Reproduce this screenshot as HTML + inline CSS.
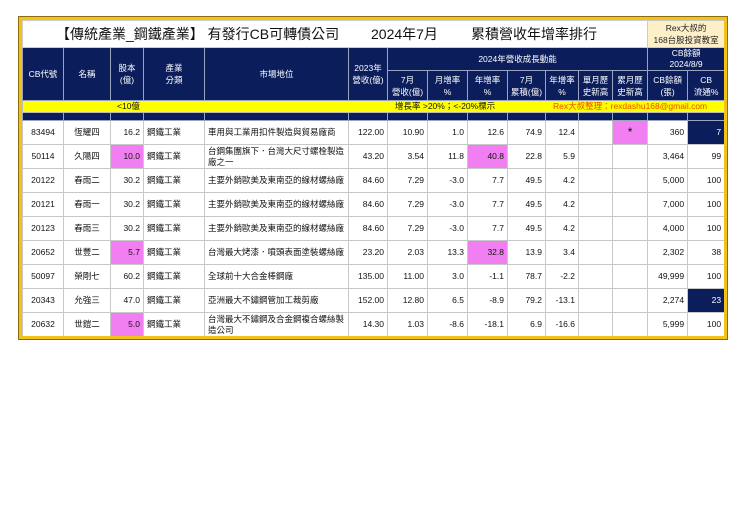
<!DOCTYPE html>
<html><head><meta charset="utf-8">
<style>
body{margin:0;width:740px;height:523px;background:#fff;position:relative;overflow:hidden;font-family:"Liberation Sans","Noto Sans CJK TC",sans-serif;}
#frame{position:absolute;left:19px;top:17px;width:702px;height:316px;border:3px solid #f2c21b;box-shadow:0 0 0 1px #8a6d10;overflow:hidden;}
table{position:absolute;left:0;top:0;border-collapse:collapse;table-layout:fixed;width:702px;font-size:8.5px;color:#111;}
td{padding:0 3px;overflow:hidden;white-space:nowrap;border:1px solid #c8c8c8;line-height:11px;}
.h td{background:#0b1e5b;color:#fff;text-align:center;border:1px solid #9aa3c0;line-height:12px;}
.d td{height:23px;}
.c{text-align:center}.r{text-align:right}.l{text-align:left}
.pk{background:#f27ff2}
.nv{background:#0b1e5b;color:#fff}
.w{white-space:normal;line-height:11px;padding-right:1px}
</style></head><body>
<div id="frame">
<table>
<colgroup><col style="width:41px"><col style="width:47px"><col style="width:33px"><col style="width:61px"><col style="width:144px"><col style="width:39px"><col style="width:40px"><col style="width:40px"><col style="width:40px"><col style="width:38px"><col style="width:33px"><col style="width:34px"><col style="width:35px"><col style="width:40px"><col style="width:37px"></colgroup>
<tr style="height:27px"><td colspan="13" style="position:relative;border:1px solid #ccc;font-size:14px;color:#111;">
<span style="position:absolute;left:33px;top:1px;line-height:24px">【傳統產業_鋼鐵產業】 有發行CB可轉債公司</span>
<span style="position:absolute;left:348px;top:1px;line-height:24px">2024年7月</span>
<span style="position:absolute;left:448px;top:1px;line-height:24px">累積營收年增率排行</span></td>
<td colspan="2" style="background:#fdf0c8;text-align:center;font-size:8.5px;line-height:12px;color:#222;padding:0">Rex大叔的<br>168台股投資教室</td></tr>
<tr class="h" style="height:23px"><td rowspan="2">CB代號</td><td rowspan="2">名稱</td><td rowspan="2">股本<br>(億)</td><td rowspan="2">產業<br>分類</td><td rowspan="2">市場地位</td><td rowspan="2" style="padding:0">2023年<br>營收(億)</td><td colspan="7">2024年營收成長動能</td><td colspan="2" style="line-height:11px">CB餘額<br>2024/8/9</td></tr>
<tr class="h" style="height:30px"><td style="padding:0">7月<br>營收(億)</td><td>月增率<br>%</td><td>年增率<br>%</td><td style="padding:0">7月<br>累積(億)</td><td style="padding:0">年增率<br>%</td><td style="padding:0">單月歷<br>史新高</td><td style="padding:0">累月歷<br>史新高</td><td style="padding:0">CB餘額<br>(張)</td><td style="padding:0">CB<br>流通%</td></tr>
<tr style="height:11px;background:#ffff00;font-size:8.5px;line-height:11px"><td colspan="15" style="position:relative;border:1px solid #bbb;padding:0;height:11px">
<span style="position:absolute;left:94px;top:0">&lt;10億</span>
<span style="position:absolute;left:372px;top:0">增長率 &gt;20%；&lt;-20%標示</span>
<span style="position:absolute;left:530px;top:0;color:#f04a00">Rex大叔整理：rexdashu168@gmail.com</span></td></tr>
<tr class="h" style="height:8px"><td></td><td></td><td></td><td></td><td></td><td></td><td></td><td></td><td></td><td></td><td></td><td></td><td></td><td></td><td></td></tr>
<tr class="d"><td class="c">83494</td><td class="c">恆耀四</td><td class="r">16.2</td><td class="l">鋼鐵工業</td><td class="l">車用與工業用扣件製造與貿易廠商</td><td class="r">122.00</td><td class="r">10.90</td><td class="r">1.0</td><td class="r">12.6</td><td class="r">74.9</td><td class="r">12.4</td><td></td><td class="c pk" style="font-size:12px">*</td><td class="r">360</td><td class="r nv">7</td></tr>
<tr class="d"><td class="c">50114</td><td class="c">久陽四</td><td class="r pk">10.0</td><td class="l">鋼鐵工業</td><td class="l w">台鋼集團旗下．台灣大尺寸螺栓製造廠之一</td><td class="r">43.20</td><td class="r">3.54</td><td class="r">11.8</td><td class="r pk">40.8</td><td class="r">22.8</td><td class="r">5.9</td><td></td><td></td><td class="r">3,464</td><td class="r">99</td></tr>
<tr class="d"><td class="c">20122</td><td class="c">春雨二</td><td class="r">30.2</td><td class="l">鋼鐵工業</td><td class="l">主要外銷歐美及東南亞的線材螺絲廠</td><td class="r">84.60</td><td class="r">7.29</td><td class="r">-3.0</td><td class="r">7.7</td><td class="r">49.5</td><td class="r">4.2</td><td></td><td></td><td class="r">5,000</td><td class="r">100</td></tr>
<tr class="d"><td class="c">20121</td><td class="c">春雨一</td><td class="r">30.2</td><td class="l">鋼鐵工業</td><td class="l">主要外銷歐美及東南亞的線材螺絲廠</td><td class="r">84.60</td><td class="r">7.29</td><td class="r">-3.0</td><td class="r">7.7</td><td class="r">49.5</td><td class="r">4.2</td><td></td><td></td><td class="r">7,000</td><td class="r">100</td></tr>
<tr class="d"><td class="c">20123</td><td class="c">春雨三</td><td class="r">30.2</td><td class="l">鋼鐵工業</td><td class="l">主要外銷歐美及東南亞的線材螺絲廠</td><td class="r">84.60</td><td class="r">7.29</td><td class="r">-3.0</td><td class="r">7.7</td><td class="r">49.5</td><td class="r">4.2</td><td></td><td></td><td class="r">4,000</td><td class="r">100</td></tr>
<tr class="d"><td class="c">20652</td><td class="c">世豐二</td><td class="r pk">5.7</td><td class="l">鋼鐵工業</td><td class="l">台灣最大烤漆．噴頭表面塗裝螺絲廠</td><td class="r">23.20</td><td class="r">2.03</td><td class="r">13.3</td><td class="r pk">32.8</td><td class="r">13.9</td><td class="r">3.4</td><td></td><td></td><td class="r">2,302</td><td class="r">38</td></tr>
<tr class="d"><td class="c">50097</td><td class="c">榮剛七</td><td class="r">60.2</td><td class="l">鋼鐵工業</td><td class="l">全球前十大合金棒鋼廠</td><td class="r">135.00</td><td class="r">11.00</td><td class="r">3.0</td><td class="r">-1.1</td><td class="r">78.7</td><td class="r">-2.2</td><td></td><td></td><td class="r">49,999</td><td class="r">100</td></tr>
<tr class="d"><td class="c">20343</td><td class="c">允強三</td><td class="r">47.0</td><td class="l">鋼鐵工業</td><td class="l">亞洲最大不鏽鋼管加工裁剪廠</td><td class="r">152.00</td><td class="r">12.80</td><td class="r">6.5</td><td class="r">-8.9</td><td class="r">79.2</td><td class="r">-13.1</td><td></td><td></td><td class="r">2,274</td><td class="r nv">23</td></tr>
<tr class="d"><td class="c">20632</td><td class="c">世鎧二</td><td class="r pk">5.0</td><td class="l">鋼鐵工業</td><td class="l w">台灣最大不鏽鋼及合金鋼複合螺絲製造公司</td><td class="r">14.30</td><td class="r">1.03</td><td class="r">-8.6</td><td class="r">-18.1</td><td class="r">6.9</td><td class="r">-16.6</td><td></td><td></td><td class="r">5,999</td><td class="r">100</td></tr>
</table>
</div>
</body></html>
